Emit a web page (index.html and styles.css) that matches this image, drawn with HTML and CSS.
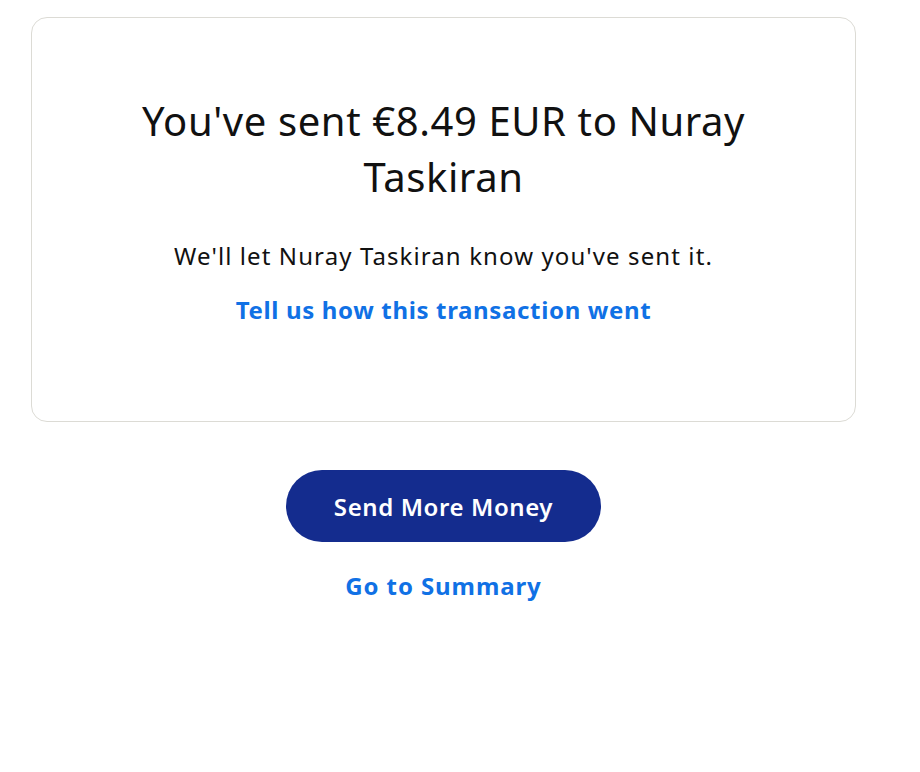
FILE: index.html
```html
<!DOCTYPE html>
<html lang="en">
<head>
<meta charset="utf-8">
<title>Payment sent</title>
<link rel="stylesheet" href="styles.css">
</head>
<body>
<main class="page">
  <section class="card">
    <h1 class="title">You've sent €8.49 EUR to Nuray Taskiran</h1>
    <p class="note">We'll let Nuray Taskiran know you've sent it.</p>
    <a class="link link-card" href="#">Tell us how this transaction went</a>
  </section>
  <div class="actions">
    <a class="primary" href="#">Send More Money</a>
    <a class="link link-summary" href="#">Go to Summary</a>
  </div>
</main>
</body>
</html>
```

FILE: styles.css
```css
* { box-sizing: border-box; }
html, body { margin: 0; padding: 0; background: #fff; }
body {
  font-family: "Noto Sans", sans-serif;
  color: #111;
}
.page {
  width: 825px;
  margin: 17px 0 0 31px;
}
.card {
  border: 1px solid #dcdbd5;
  border-radius: 16px;
  padding: 75px 90px 95px;
  display: flex;
  flex-direction: column;
  align-items: center;
  text-align: center;
}
.title {
  margin: 0;
  font-size: 40px;
  line-height: 56px;
  font-weight: 400;
  letter-spacing: 0.6px;
  max-width: 640px;
}
.note {
  margin: 35px 0 0;
  font-size: 24px;
  line-height: 32px;
  letter-spacing: 1.1px;
}
.link {
  display: block;
  color: #1071e5;
  font-weight: 700;
  font-size: 24px;
  line-height: 32px;
  text-decoration: none;
  letter-spacing: 0.65px;
  margin-top: 22px;
}
.actions {
  display: flex;
  flex-direction: column;
  align-items: center;
  padding-top: 48px;
}
.primary {
  display: flex;
  align-items: center;
  justify-content: center;
  height: 72px;
  padding: 0 48px;
  border-radius: 36px;
  background: #142c8e;
  color: #fff;
  font-size: 24px;
  font-weight: 600;
  letter-spacing: 0.6px;
  text-decoration: none;
}
.actions .link-summary {
  margin-top: 28px;
  letter-spacing: 0.9px;
}
```
